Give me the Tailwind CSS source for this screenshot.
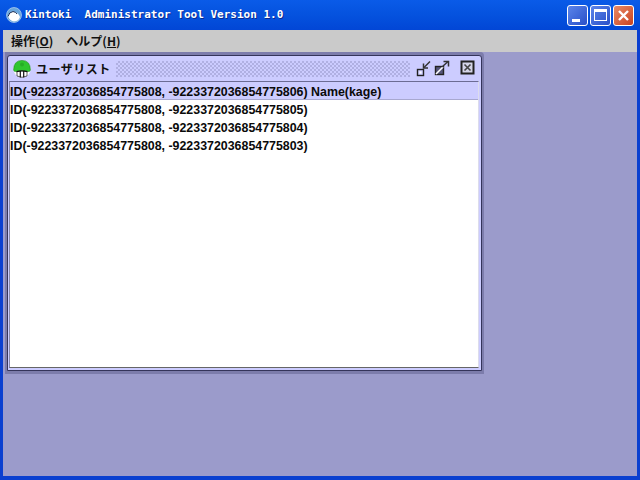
<!DOCTYPE html>
<html><head><meta charset="utf-8"><script src="https://cdn.jsdelivr.net/npm/@tailwindcss/browser@4"></script></head>
<body class="m-0 w-[640px] h-[480px] overflow-hidden">
<div class="w-[640px] h-[480px] flex flex-col bg-[#0a3fd0] font-['Liberation_Sans',sans-serif]">
  <div class="h-[30px] shrink-0 flex items-center pl-[6px] pr-[6px] bg-gradient-to-b from-[#0a5be8] via-[#0552de] to-[#0246d6]">
    <svg width="16" height="16" viewBox="0 0 16 16" class="mr-[3px] shrink-0"><circle cx="8" cy="8" r="7.5" fill="#6aa6dc" stroke="#cfe2f5" stroke-width=".6"/><path d="M2 9.5 Q3 5 7 4.5 Q12 5 14 10 Q13 14 8 14.5 Q4 14 2 9.5Z" fill="#fff"/><path d="M2 9.5 Q3 5 7 4.5 Q10 5 11 7" stroke="#1d2f55" stroke-width="1" fill="none"/></svg>
    <span class="font-['DejaVu_Sans_Mono',monospace] font-bold text-[11px] text-white whitespace-pre [text-shadow:1px_1px_0_#0a2a90]">Kintoki  Administrator Tool Version 1.0</span>
    <div class="ml-auto flex gap-[2px]">
      <div class="w-[21px] h-[21px] rounded-[3px] border border-white bg-gradient-to-br from-[#5c85ea] to-[#2a4fc8] flex items-end pl-[4px] pb-[3px]"><div class="w-[8px] h-[3px] bg-white"></div></div>
      <div class="w-[21px] h-[21px] rounded-[3px] border border-white bg-gradient-to-br from-[#5c85ea] to-[#2a4fc8] flex items-center justify-center"><div class="w-[13px] h-[12px] border border-white border-t-[3px]"></div></div>
      <div class="w-[21px] h-[21px] rounded-[3px] border border-white bg-gradient-to-br from-[#e88a66] to-[#c9401c] flex items-center justify-center"><svg width="13" height="13" viewBox="0 0 13 13"><path d="M2 2 L11 11 M11 2 L2 11" stroke="#fff" stroke-width="2.4"/></svg></div>
    </div>
  </div>
  <div class="flex-1 mx-[3px] mb-[4px] flex flex-col relative">
    <div class="h-[22px] shrink-0 bg-[#cacaca] flex items-center gap-[13px] pl-[8px] font-['Noto_Sans_CJK_JP',sans-serif] font-bold text-[12px] text-[#111]">
      <span>操作(<span class="underline">O</span>)</span>
      <span>ヘルプ(<span class="underline">H</span>)</span>
    </div>
    <div class="flex-1 bg-[#9b9bcb]"></div>
    <div class="absolute left-[2px] top-[22px] w-[479px] h-[322px] bg-[#7c7cab] pt-[3px] pl-[2px] pr-[2px] pb-[3px] rounded-tr-[4px] flex flex-col">
      <div class="flex-1 bg-[#ccccff] border border-[#34345a] flex flex-col rounded-t-[3px]">
        <div class="h-[25px] shrink-0 flex items-center pl-[5px] pt-[1px]">
          <svg width="18" height="18" viewBox="0 0 18 18" class="shrink-0"><circle cx="9" cy="9" r="8.6" fill="#fff"/><path d="M.6 10 Q.6 .6 9 .4 Q17.4 .6 17.4 10 Q17.4 11.8 14.5 11.6 Q9 10 3.5 11.6 Q.6 11.8 .6 10Z" fill="#2fc52f" stroke="#1a8a1a" stroke-width=".6"/><path d="M3.5 11.6 Q9 10 14.5 11.6" stroke="#111" stroke-width="1.2" fill="none"/><path d="M4 12 V16 Q9 18.6 14 16 V12" stroke="#333" stroke-width=".8" fill="none"/><path d="M7.3 11v6.5M10.7 11v6.5" stroke="#111" stroke-width="1.2"/><circle cx="9" cy="4.5" r="2" fill="#26ad26"/></svg>
          <span class="ml-[5px] w-[80px] shrink-0 font-['Noto_Sans_CJK_JP',sans-serif] font-bold text-[12px] tracking-[.5px] text-[#111] whitespace-nowrap">ユーザリスト</span>
          <div class="w-[294px] h-[16px] shrink-0 bg-[repeating-conic-gradient(#b0b0e2_0_25%,#ccccff_0_50%)] bg-[length:4px_4px]"></div>
          <svg width="62" height="18" viewBox="0 0 62 18" class="ml-[5px] shrink-0">
            <rect x="2.5" y="9.5" width="6" height="6" fill="#ccccff" stroke="#222" stroke-width="1.4"/><rect x="4.5" y="11.5" width="2" height="2" fill="#fff"/><path d="M15 1.5 L9 7.5" stroke="#333" stroke-width="1.5"/><path d="M8.5 3.5 V8 H13" stroke="#333" stroke-width="1.5" fill="none"/>
            <rect x="20.5" y="6.5" width="8" height="8" fill="#55557a" stroke="#222" stroke-width="1.4"/><path d="M21 14 L28 7" stroke="#fff" stroke-width="1.6"/><path d="M27 7 L33 1.5" stroke="#333" stroke-width="1.5"/><path d="M28.5 1.5 H33.5 V6.5" stroke="#333" stroke-width="1.5" fill="none"/>
            <rect x="46.5" y="1.5" width="12" height="12" fill="#d4d4e8" stroke="#222" stroke-width="2"/><path d="M49.5 4.5 L55.5 10.5 M55.5 4.5 L49.5 10.5" stroke="#444" stroke-width="1.6"/>
          </svg>
        </div>
        <div class="flex-1 ml-[1px] mr-[2px] mb-[2px] bg-white border-t border-t-[#6c6c94] border-b border-b-[#666] border-l border-l-[#8a8aa8] border-r border-r-[#dcdcec] flex flex-col text-[12.4px] font-bold text-[#0a0a0a] leading-[20px]">
          <div class="h-[18px] bg-[#ccccff] border-b border-[#a8a8d0] whitespace-nowrap">ID(-9223372036854775808, -9223372036854775806) Name(kage)</div>
          <div class="h-[18px] whitespace-nowrap">ID(-9223372036854775808, -9223372036854775805)</div>
          <div class="h-[18px] whitespace-nowrap">ID(-9223372036854775808, -9223372036854775804)</div>
          <div class="h-[18px] whitespace-nowrap">ID(-9223372036854775808, -9223372036854775803)</div>
        </div>
      </div>
    </div>
  </div>
</div>
</body></html>
